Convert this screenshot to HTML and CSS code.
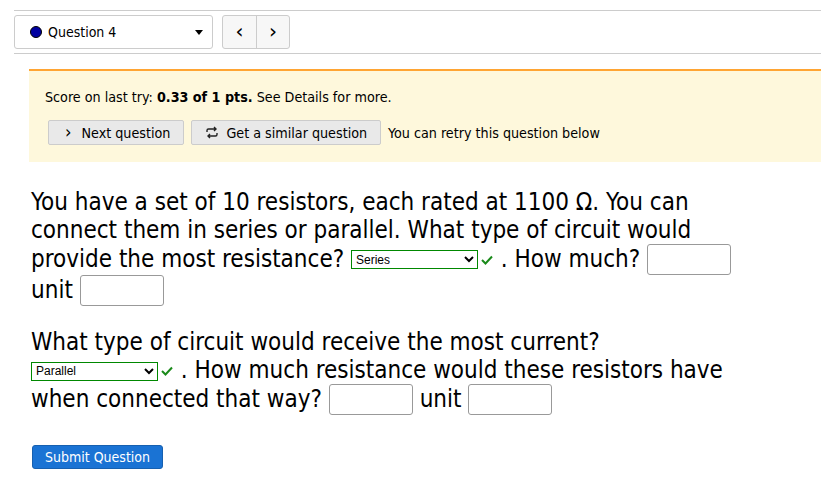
FILE: index.html
```html
<!DOCTYPE html>
<html lang="en">
<head>
 <meta charset="UTF-8">
 <title>Question 4</title>
 <link rel="stylesheet" href="styles.css">
</head>
<body>
 <div class="header">
  <div class="qselect">
   <span class="dot"></span>
   <span class="qname">Question 4</span>
   <span class="caret"></span>
  </div>
  <div class="qnav">
   <button class="navbtn">&lsaquo;</button>
   <button class="navbtn">&rsaquo;</button>
  </div>
 </div>

 <div class="notice">
  <p class="score">Score on last try: <b>0.33 of 1 pts.</b> See Details for more.</p>
  <div class="actions">
   <button class="action"><span class="chev">&rsaquo;</span> Next question</button>
   <button class="action">
    <svg width="14" height="13" viewBox="0 0 14 13"><path d="M2 6V4.5Q2 3 3.5 3H11M9 1l2 2-2 2M12 7v1.5Q12 10 10.5 10H3M5 8l-2 2 2 2" fill="none" stroke="#222" stroke-width="1.4"/></svg>
    Get a similar question</button>
   <span class="retry">You can retry this question below</span>
  </div>
 </div>

 <div class="question">
  <p>You have a set of 10 resistors, each rated at 1100 &Omega;. You can connect them in series or parallel. What type of circuit would provide the most resistance? <span class="pick"><select class="choice"><option>Series</option></select><svg class="ok" width="12" height="10" viewBox="0 0 12 10"><path d="M1 5l3.5 3.5L11 1.5" fill="none" stroke="#1a8a1a" stroke-width="2"/></svg></span> . How much? <input type="text" class="ans"> unit <input type="text" class="ans"></p>
  <p>What type of circuit would receive the most current? <span class="pick"><select class="choice"><option>Parallel</option></select><svg class="ok" width="12" height="10" viewBox="0 0 12 10"><path d="M1 5l3.5 3.5L11 1.5" fill="none" stroke="#1a8a1a" stroke-width="2"/></svg></span> . How much resistance would these resistors have when connected that way? <input type="text" class="ans"> unit <input type="text" class="ans"></p>
 </div>

 <button class="submit">Submit Question</button>
</body>
</html>
```

FILE: styles.css
```css
body {
    margin: 0;
    font-family: "DejaVu Sans Condensed", "DejaVu Sans", sans-serif;
    color: #000;
}

.header {
    margin: 10px 0 0 14px;
    border-top: 1px solid #ccc;
    border-bottom: 1px solid #ccc;
    padding: 4px 0;
    display: flex;
    gap: 9px;
}

.qselect {
    width: 173px;
    height: 32px;
    border: 1px solid #ccc;
    border-radius: 3px;
    display: flex;
    align-items: center;
    padding: 0 9px 0 15px;
    font-size: 14px;
}

.dot {
    width: 10px;
    height: 10px;
    border-radius: 50%;
    background: #0000a0;
    border: 1px solid #000;
    margin-right: 6px;
}

.qname {
    flex: 1;
}

.caret {
    border-left: 4px solid transparent;
    border-right: 4px solid transparent;
    border-top: 5px solid #000;
}

.qnav {
    display: flex;
    border: 1px solid #ccc;
    border-radius: 3px;
    background: #f7f7f7;
}

.navbtn {
    width: 33px;
    border: none;
    background: none;
    font-size: 20px;
    font-family: "DejaVu Sans", sans-serif;
    padding: 0 0 3px;
}

.navbtn + .navbtn {
    border-left: 1px solid #ccc;
}

.notice {
    margin: 15px 0 0 29px;
    border-top: 2px solid #ffa533;
    background: #fef8dc;
    padding: 18px 16px 17px;
    font-size: 14.2px;
}

.score {
    margin: 0 0 15px;
}

.actions {
    display: flex;
    align-items: center;
    gap: 7px;
    padding-left: 3px;
}

.action {
    height: 25px;
    padding: 0 13px;
    border: 1px solid #ccc;
    border-radius: 2px;
    background: #e9e9e9;
    font-family: "DejaVu Sans Condensed", "DejaVu Sans", sans-serif;
    font-size: 14.2px;
    display: flex;
    align-items: center;
    gap: 7px;
}

.chev {
    font-size: 18px;
    padding: 0 3px 2px;
}

.question {
    margin: 26px 0 0 31px;
    width: 712px;
    font-size: 24px;
    line-height: 28px;
}

.question p {
    margin: 0 0 22px;
}

.pick {
    white-space: nowrap;
}

.choice {
    width: 127px;
    height: 19px;
    border: 1px solid #080;
    border-radius: 0;
    font-family: "Liberation Sans", sans-serif;
    font-size: 12px;
    padding: 0;
    vertical-align: middle;
    background: #fff;
}

.ok {
    vertical-align: middle;
    margin: 0 1px 0 3px;
}

.ans {
    width: 78px;
    height: 27px;
    border: 1px solid #999;
    border-radius: 3px;
    vertical-align: middle;
}

.submit {
    margin: 8px 0 0 32px;
    background: #1a73d4;
    color: #fff;
    border: 1px solid #1660b0;
    border-radius: 3px;
    height: 24px;
    padding: 0 12px;
    font-family: "DejaVu Sans Condensed", "DejaVu Sans", sans-serif;
    font-size: 14px;
}
```
